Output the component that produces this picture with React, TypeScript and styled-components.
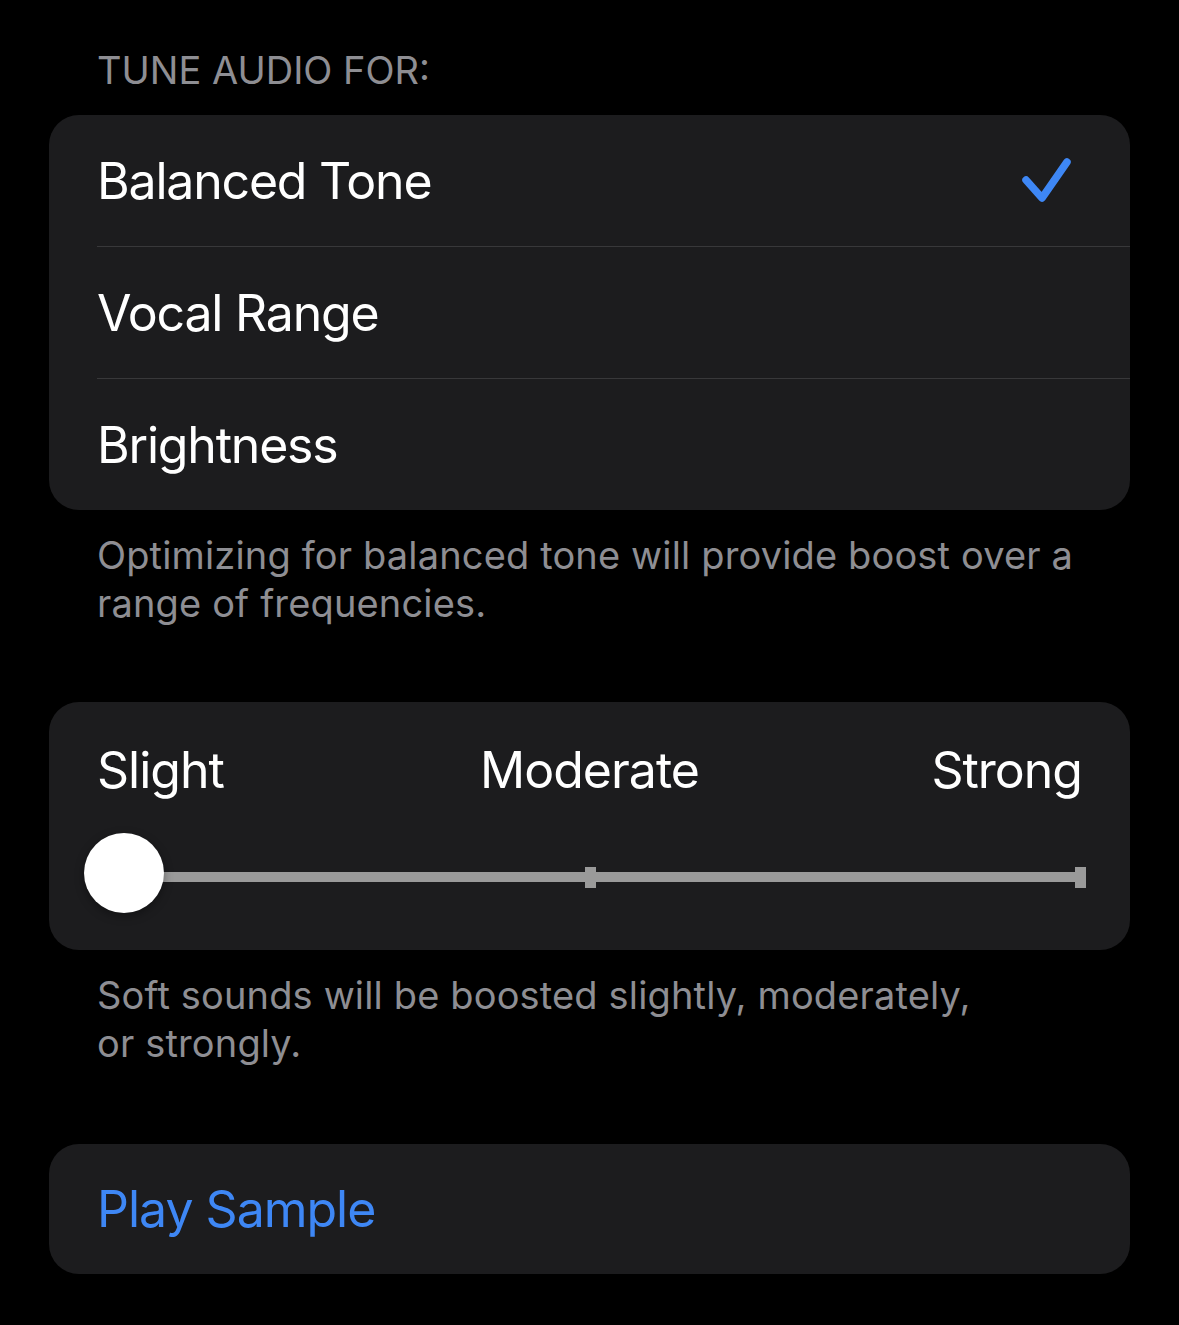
import styled, { createGlobalStyle } from "styled-components";

const GlobalStyle = createGlobalStyle`
  html, body {
    margin: 0;
    padding: 0;
    background: #000;
  }
  body {
    font-family: Inter, "Noto Sans", "Liberation Sans", sans-serif;
    -webkit-font-smoothing: antialiased;
  }
`;

const options = ["Balanced Tone", "Vocal Range", "Brightness"];

export default function App() {
  return (
    <Page>
      <GlobalStyle />
      <SectionHeader>Tune Audio For:</SectionHeader>
      <Card>
        {options.map((label, i) => (
          <OptionRow key={label}>
            <RowLabel>{label}</RowLabel>
            {i === 0 && (
              <svg width="50" height="46" viewBox="0 0 50 46">
                <path
                  d="M4 22 L20 40 L45 4"
                  fill="none"
                  stroke="#3e87f5"
                  strokeWidth="7.5"
                  strokeLinecap="round"
                  strokeLinejoin="round"
                />
              </svg>
            )}
          </OptionRow>
        ))}
      </Card>
      <Footnote>
        Optimizing for balanced tone will provide boost over a
        <br />
        range of frequencies.
      </Footnote>

      <SliderCard>
        <LevelLabels>
          <LevelLabel $align="start">Slight</LevelLabel>
          <LevelLabel $align="center">Moderate</LevelLabel>
          <LevelLabel $align="end">Strong</LevelLabel>
        </LevelLabels>
        <SliderRow>
          <Track>
            <Tick $hidden />
            <Tick />
            <Tick />
          </Track>
          <Knob />
        </SliderRow>
      </SliderCard>
      <Footnote>
        Soft sounds will be boosted slightly, moderately,
        <br />
        or strongly.
      </Footnote>

      <ActionCard>
        <ActionLabel>Play Sample</ActionLabel>
      </ActionCard>
    </Page>
  );
}

const Page = styled.div`
  padding: 46px 49px 60px;
  width: 1179px;
  box-sizing: border-box;
`;

const SectionHeader = styled.div`
  padding: 0 48px;
  font-size: 38px;
  line-height: 48px;
  color: #8e8e93;
  text-transform: uppercase;
  margin-bottom: 21px;
`;

const Card = styled.div`
  background: #1c1c1e;
  border-radius: 30px;
  overflow: hidden;
`;

const OptionRow = styled.div`
  display: flex;
  align-items: center;
  justify-content: space-between;
  height: 131px;
  margin-left: 48px;
  padding-right: 58px;

  & + & {
    border-top: 1px solid #38383a;
  }
`;

const RowLabel = styled.span`
  font-size: 50px;
  letter-spacing: -1.2px;
  color: #fff;
`;

const Footnote = styled.p`
  margin: 21px 0 0;
  padding: 0 48px;
  font-size: 38px;
  letter-spacing: 0.15px;
  line-height: 48px;
  color: #8e8e93;
`;

const SliderCard = styled(Card)`
  margin-top: 75px;
  padding: 38px 44px 37px 46px;
`;

const LevelLabels = styled.div`
  display: grid;
  grid-template-columns: 1fr auto 1fr;
  padding: 0 0 0 2px;
  margin-right: 4px;
`;

const LevelLabel = styled.span<{ $align: "start" | "center" | "end" }>`
  justify-self: ${(p) => p.$align};
  font-size: 50px;
  letter-spacing: -1px;
  line-height: 60px;
  color: #fff;
`;

const SliderRow = styled.div`
  position: relative;
  height: 80px;
  margin-top: 33px;
  display: flex;
  align-items: center;
`;

const Track = styled.div`
  flex: 1;
  height: 10px;
  background: #9a9a9a;
  display: flex;
  align-items: center;
  justify-content: space-between;
  margin-top: 8px;
`;

const Tick = styled.span<{ $hidden?: boolean }>`
  width: 11px;
  height: 21px;
  background: #9a9a9a;
  visibility: ${(p) => (p.$hidden ? "hidden" : "visible")};
`;

const Knob = styled.div`
  position: absolute;
  left: -11px;
  top: 0;
  width: 80px;
  height: 80px;
  border-radius: 50%;
  background: #fff;
  box-shadow: 0 3px 10px rgba(0, 0, 0, 0.35);
`;

const ActionCard = styled(Card)`
  margin-top: 77px;
  height: 130px;
  display: flex;
  align-items: center;
  padding: 0 48px;
`;

const ActionLabel = styled.span`
  font-size: 50px;
  letter-spacing: -1px;
  color: #3e87f5;
`;
